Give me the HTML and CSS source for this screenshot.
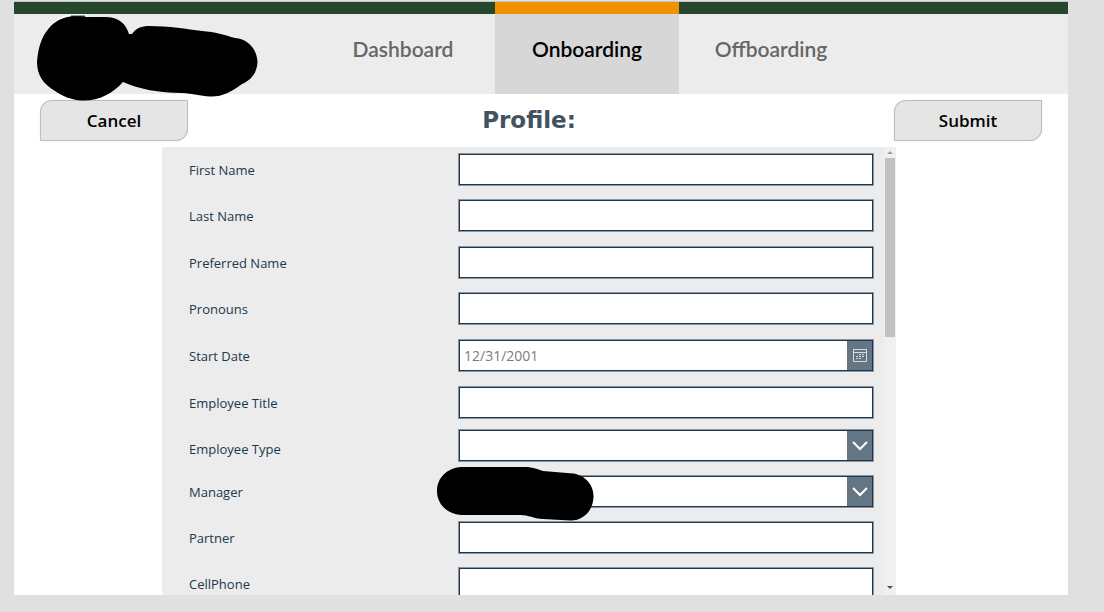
FILE: index.html
```html
<!DOCTYPE html>
<html lang="en">
<head>
<meta charset="utf-8">
<title>Onboarding - Profile</title>
<link rel="stylesheet" href="styles.css">
</head>
<body>
<div class="frame">
  <header class="header">
    <svg class="logo" viewBox="36 14 224 88" aria-hidden="true">
      <path d="M40 45C45 27 57 15 72 14.500H86L96 22L52 40Z" fill="#fff"/>
      <path d="M71 15.500H85V18H70Z" fill="#00594f"/>
      <path d="M72 16.500C78 15.500 85 17 92 17H107C119 17.500 126 24 129 34H132C136 28 142 26 149 26C169 26 187 29 202 31C215 32 225 35 235 38C248 39 257 49 257.500 62C257 73 251 80 242 84C231 92 222 97 210 96.500C200 96 193 93.500 182 93C159 93 139 89 123 82C112 94 99 101 82 100.500C71 100 62 96 55 91C43 84 37 75 37 62C38 47 42 36 49 28C55 21 63 17 72 16.500Z" fill="#000"/>
    </svg>
    <nav class="tabs">
      <a class="tab" href="#dashboard">Dashboard</a>
      <a class="tab tab-active" href="#onboarding" aria-current="page">Onboarding</a>
      <a class="tab" href="#offboarding">Offboarding</a>
    </nav>
  </header>
  <div class="toolbar">
    <button class="action action-cancel" type="button">Cancel</button>
    <h1 class="title">Profile:</h1>
    <button class="action action-submit" type="submit" form="profile">Submit</button>
  </div>
  <main class="panel">
    <form class="form" id="profile">
      <label class="label" for="first">First Name</label>
      <input class="field" id="first" type="text">
      <label class="label" for="last">Last Name</label>
      <input class="field" id="last" type="text">
      <label class="label" for="preferred">Preferred Name</label>
      <input class="field" id="preferred" type="text">
      <label class="label" for="pronouns">Pronouns</label>
      <input class="field" id="pronouns" type="text">
      <label class="label" for="start">Start Date</label>
      <div class="field combo">
        <input class="combo-input" id="start" type="text" placeholder="12/31/2001">
        <button class="combo-icon" type="button" aria-label="Choose date">
          <svg width="14" height="13" viewBox="0 0 14 13" fill="none" stroke="#d5dbdf">
            <path d="M.5 .5H13.500V12.500H.5ZM.5 3.500H13.500"/>
            <path d="M6 5.500H11.500M3 7.500H11.500M3 9.500H9" stroke-dasharray="2 1"/>
          </svg>
        </button>
      </div>
      <label class="label" for="jobtitle">Employee Title</label>
      <input class="field" id="jobtitle" type="text">
      <label class="label label-low" for="type">Employee Type</label>
      <div class="field combo">
        <select class="combo-input" id="type"><option></option></select>
        <span class="combo-icon">
          <svg width="18" height="12" viewBox="0 0 18 12" fill="none" stroke="#fff" stroke-width="2"><path d="M2 2L9 9L16 2"/></svg>
        </span>
      </div>
      <label class="label" for="manager">Manager</label>
      <div class="field combo">
        <select class="combo-input" id="manager"><option></option></select>
        <span class="combo-icon">
          <svg width="18" height="12" viewBox="0 0 18 12" fill="none" stroke="#fff" stroke-width="2"><path d="M2 2L9 9L16 2"/></svg>
        </span>
        <svg class="mask" viewBox="436 466 160 56" aria-hidden="true">
          <path d="M461 467H524C532 467 537 469 543 471L573 473.500C585 475 594 485 593.500 497C593 511 583 521 570 520.500L543 519C533 518.500 529 515 520 515H461C447 514 437 504 437 491C437 478 447 468 461 467Z"/>
        </svg>
      </div>
      <label class="label" for="partner">Partner</label>
      <input class="field" id="partner" type="text">
      <label class="label" for="cell">CellPhone</label>
      <input class="field" id="cell" type="tel">
    </form>
    <div class="scrollbar" aria-hidden="true">
      <svg class="arrow" viewBox="0 0 12 11"><path d="M3 7L6 4L9 7Z" fill="#a3a3a3"/></svg>
      <div class="track"><div class="thumb"></div></div>
      <svg class="arrow" viewBox="0 0 12 11"><path d="M3 2L6 5L9 2Z" fill="#505050"/></svg>
    </div>
  </main>
</div>
</body>
</html>
```
FILE: styles.css
```css
* {
  box-sizing: border-box;
}

body {
  margin: 0;
  height: 100vh;
  padding: 1px 36px 17px 14px;
  background: #e0e0e0;
  font-family: "Open Sans", "Noto Sans", sans-serif;
  color: #21374b;
}

.frame {
  display: flex;
  flex-direction: column;
  height: 100%;
  background: #fff;
  border-top: 1px solid #c4c8c5;
}

.header {
  position: relative;
  flex: none;
  height: 92px;
  padding-left: 297px;
  background: #ececec;
  border-top: 12px solid #27462e;
}

.logo {
  position: absolute;
  top: 0;
  left: 22px;
  width: 224px;
  height: 88px;
}

.tabs {
  display: grid;
  grid-template-columns: repeat(3, minmax(0, 184px));
  height: 92px;
  margin-top: -12px;
}

.tab {
  display: flex;
  align-items: center;
  justify-content: center;
  padding-bottom: 10px;
  border-top: 12px solid #27462e;
  font: 600 21px/28px Lato, sans-serif;
  color: #666;
  text-decoration: none;
}

.tab-active {
  background: #d7d7d7;
  border-top-color: #f29100;
  color: #000;
}

.toolbar {
  display: grid;
  flex: none;
  grid-template-columns: 148px 1fr 172px;
  height: 53px;
  padding: 6px 0;
}

.action {
  grid-row: 1;
  width: 148px;
  padding: 0;
  background: #e5e5e5;
  border: 1px solid #bebebe;
  border-radius: 12px 0;
  box-shadow: 0 0 1px #c3c3c3;
  font: 600 17px/24px "Open Sans", sans-serif;
  color: #000;
}

.action-cancel {
  grid-column: 1 / 3;
  justify-self: start;
  margin-left: 26px;
}

.action-submit {
  grid-column: 2 / 4;
  justify-self: end;
  margin-right: 26px;
}

.title {
  grid-row: 1;
  grid-column: 2;
  justify-self: center;
  align-self: center;
  margin: 0 0 2px;
  font: 700 23px/32px "DejaVu Sans", sans-serif;
  color: #435260;
}

.panel {
  display: flex;
  flex: 1;
  min-height: 0;
  margin: 0 172px 0 148px;
  overflow: hidden;
  background: #ececec;
}

.form {
  display: grid;
  flex: 1;
  grid-template-columns: 270px 1fr;
  grid-template-rows: 46px 47px 46px 47px 47px 43px;
  grid-auto-rows: 46px;
  padding: 6px 11px 0 27px;
}

.label {
  font-size: 13px;
  line-height: 34px;
}

.label-low {
  padding-top: 3px;
}

.field {
  width: 100%;
  height: 31px;
  margin: 1px 0;
  padding: 0 4px;
  background: #fff;
  border: 1px solid #21374b;
  border-radius: 0;
  box-shadow: 0 0 0 1px #8995a0;
  font: 14px/20px "Open Sans", sans-serif;
  color: #21374b;
}

.combo {
  position: relative;
  display: flex;
  padding: 0;
}

.combo-input {
  flex: 1;
  min-width: 0;
  padding: 0 4px;
  background: none;
  border: 0;
  border-radius: 0;
  appearance: none;
  font: inherit;
  color: inherit;
}

.combo-input::placeholder {
  color: #7b7b7b;
}

.combo-icon {
  display: flex;
  flex: none;
  align-items: center;
  justify-content: center;
  width: 25px;
  padding: 0;
  background: #647684;
  border: 0;
}

.mask {
  position: absolute;
  top: -11px;
  left: -24px;
  width: 160px;
  height: 56px;
}

.scrollbar {
  display: flex;
  flex: none;
  flex-direction: column;
  width: 12px;
  background: #f0f0f0;
}

.arrow {
  flex: none;
  height: 11px;
}

.track {
  flex: 1;
  padding: 0 1px;
}

.thumb {
  height: 42%;
  background: #c1c1c1;
}
```
